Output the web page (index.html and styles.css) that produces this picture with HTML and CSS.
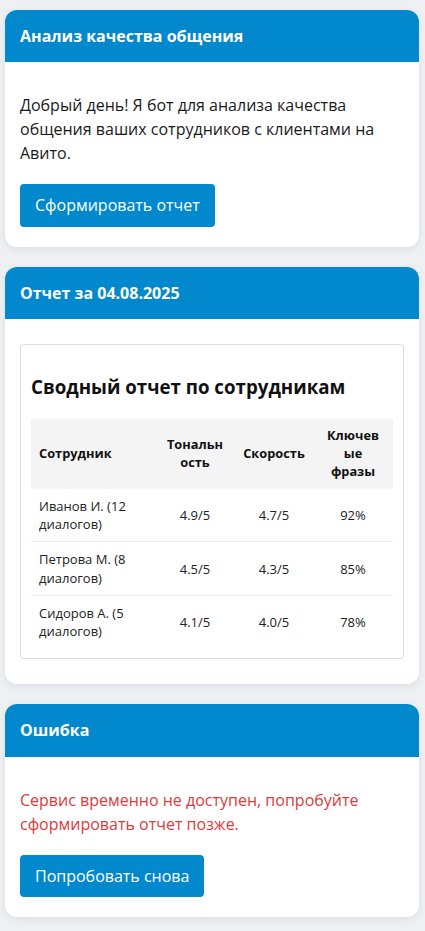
FILE: index.html
```html
<!DOCTYPE html>
<html lang="ru">
<head>
<meta charset="utf-8">
<title>Анализ качества общения</title>
<link rel="stylesheet" href="styles.css">
</head>
<body>
<div class="page">
  <section class="card">
    <h2 class="card-head">Анализ качества общения</h2>
    <div class="card-body">
      <p class="text">Добрый день! Я бот для анализа качества общения ваших сотрудников с клиентами на Авито.</p>
      <button class="btn">Сформировать отчет</button>
    </div>
  </section>

  <section class="card">
    <h2 class="card-head">Отчет за 04.08.2025</h2>
    <div class="card-body">
      <div class="report">
        <h3 class="report-title">Сводный отчет по сотрудникам</h3>
        <table class="table">
          <colgroup>
            <col class="c1"><col class="c2"><col class="c3"><col class="c4">
          </colgroup>
          <thead>
            <tr>
              <th class="left">Сотрудник</th>
              <th class="narrow">Тональность</th>
              <th>Скорость</th>
              <th class="narrow">Ключевые фразы</th>
            </tr>
          </thead>
          <tbody>
            <tr>
              <td class="left">Иванов И. (12 диалогов)</td>
              <td>4.9/5</td>
              <td>4.7/5</td>
              <td>92%</td>
            </tr>
            <tr>
              <td class="left">Петрова М. (8 диалогов)</td>
              <td>4.5/5</td>
              <td>4.3/5</td>
              <td>85%</td>
            </tr>
            <tr>
              <td class="left">Сидоров А. (5 диалогов)</td>
              <td>4.1/5</td>
              <td>4.0/5</td>
              <td>78%</td>
            </tr>
          </tbody>
        </table>
      </div>
    </div>
  </section>

  <section class="card">
    <h2 class="card-head">Ошибка</h2>
    <div class="card-body">
      <p class="text error">Сервис временно не доступен, попробуйте сформировать отчет позже.</p>
      <button class="btn">Попробовать снова</button>
    </div>
  </section>
</div>
</body>
</html>
```

FILE: styles.css
```css
html, body {
  margin: 0;
  padding: 0;
}
body {
  background: #eef0f4;
  font-family: "Open Sans", "Noto Sans", sans-serif;
  font-size: 16px;
  line-height: 1.4;
  color: #1a1a1a;
}
.page {
  display: flex;
  flex-direction: column;
  gap: 20px;
  padding: 10px 6px 13px 5px;
}
.card {
  background: #fff;
  border-radius: 12px;
  overflow: hidden;
  box-shadow: 0 2px 8px rgba(0, 0, 0, 0.08);
}
.card-head {
  margin: 0;
  background: #0288cc;
  color: #fff;
  font-size: 16px;
  font-weight: 700;
  line-height: 1.4;
  padding: 15px;
}
.card-body {
  padding: 15px;
}
.text {
  margin: 16px 0;
  line-height: 1.5;
}
.error {
  color: #dc3b3b;
}
.btn {
  display: inline-block;
  margin: 3px 0 5px;
  background: #0288cc;
  color: #fff;
  border: 0;
  border-radius: 4px;
  padding: 10px 15px;
  font-family: inherit;
  font-size: 16px;
  line-height: 1.4;
  cursor: pointer;
}
.report {
  margin: 10px 0;
  border: 1px solid #dcdcdc;
  border-radius: 4px;
  padding: 10px;
}
.report-title {
  margin: 19px 0;
  font-size: 18.72px;
  font-weight: 700;
  line-height: 1.4;
  color: #111;
}
.table {
  width: 100%;
  table-layout: fixed;
  border-collapse: collapse;
  font-size: 12.8px;
  line-height: 1.4;
  color: #222;
}
.c1 { width: 124px; }
.c2 { width: 80px; }
.c3 { width: 78px; }
.c4 { width: 80px; }
.table th,
.table td {
  padding: 8px;
  text-align: center;
  vertical-align: middle;
  overflow-wrap: anywhere;
}
.table td {
  font-size: 13px;
}
.table th.narrow {
  padding-left: 10px;
  padding-right: 10px;
}
.table th {
  background: #f4f4f5;
  font-weight: 700;
  color: #111;
}
.table .left {
  text-align: left;
}
.table tbody tr {
  border-bottom: 1px solid #ececec;
}
.table tbody tr:last-child {
  border-bottom: 0;
}
```
